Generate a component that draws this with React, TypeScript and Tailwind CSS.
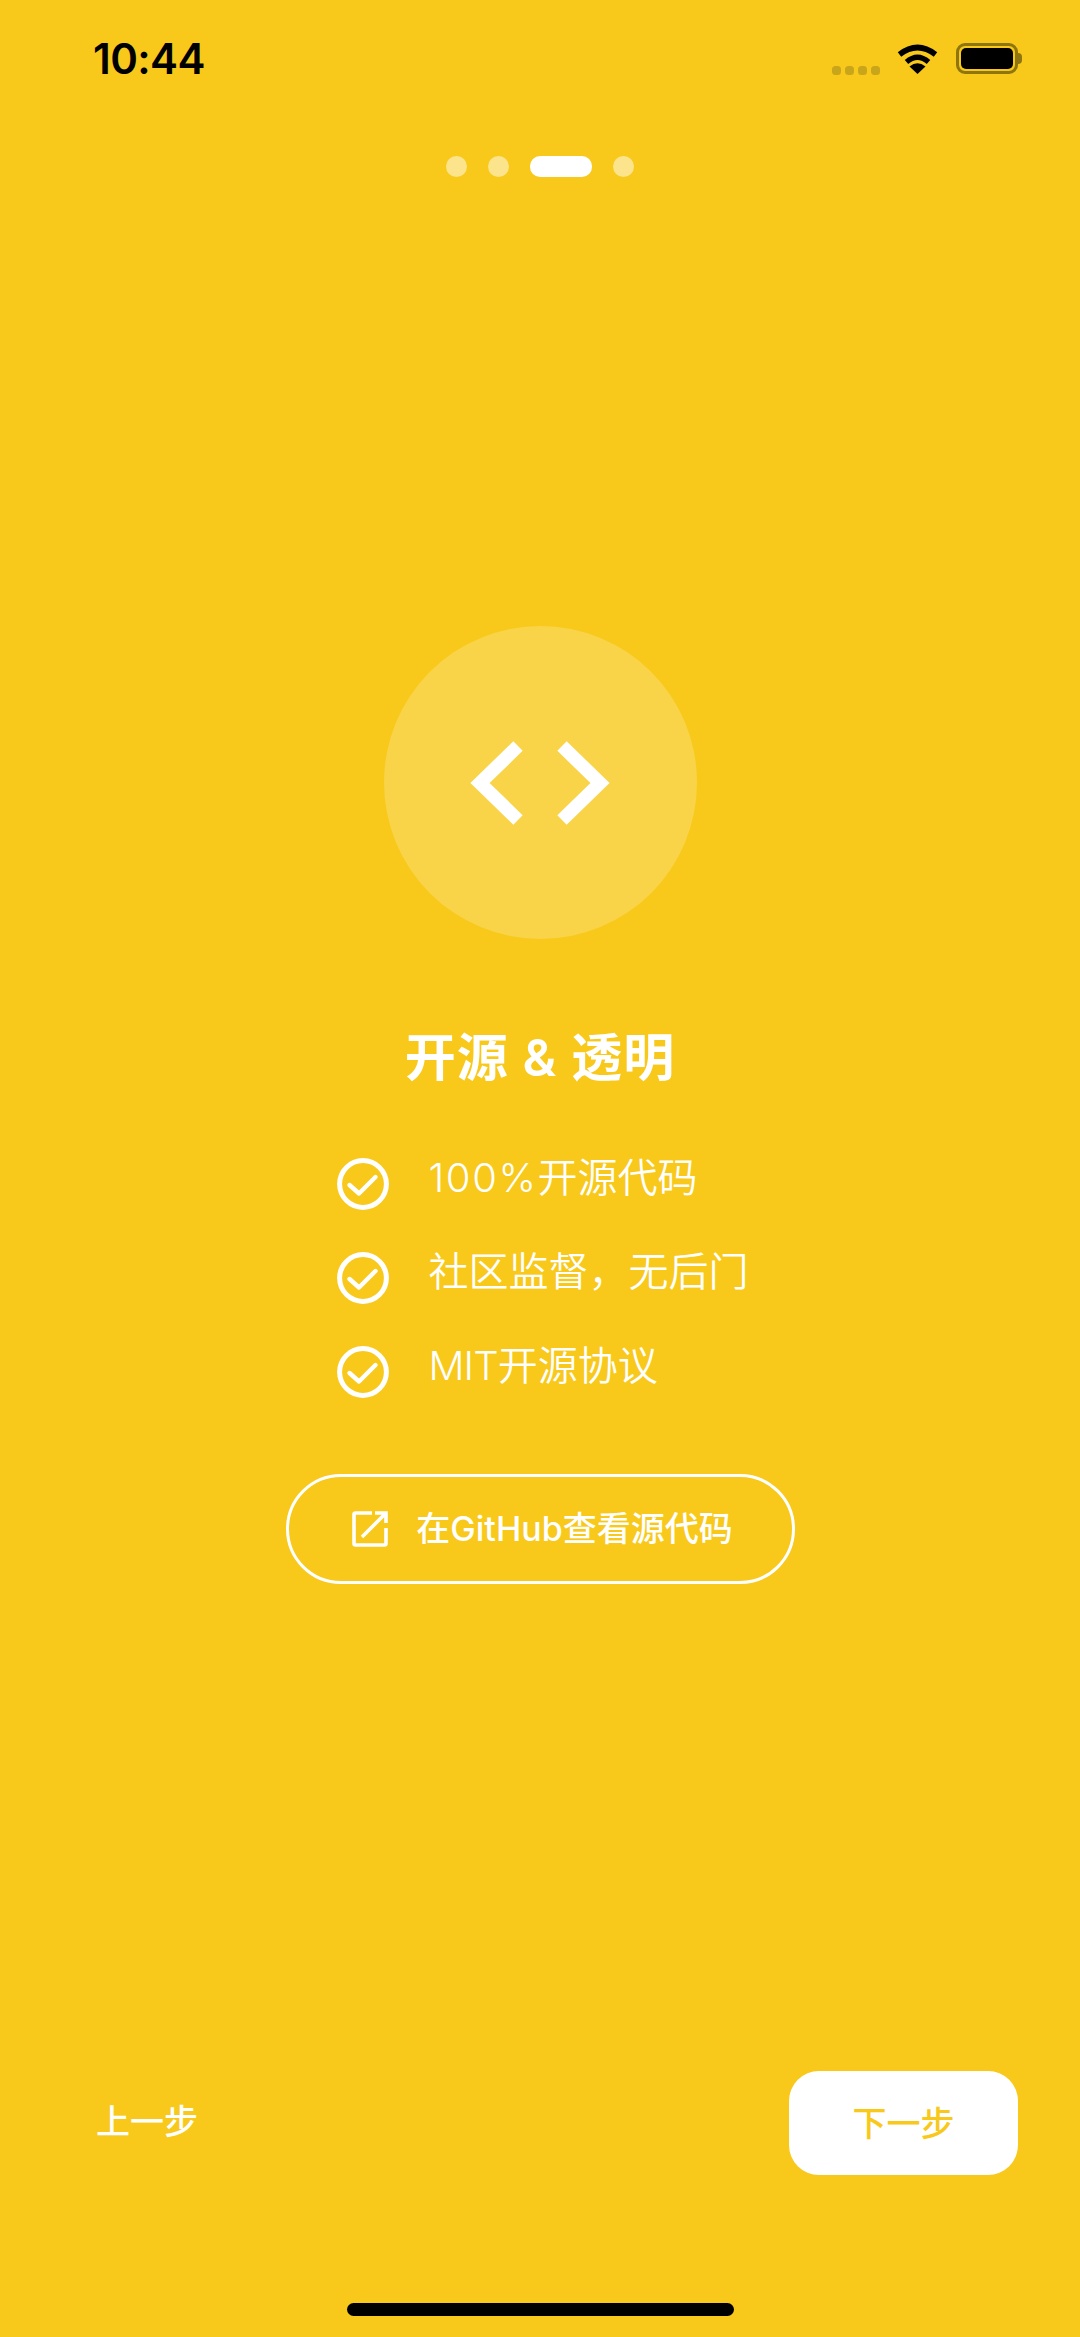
import React from "react";

const cjk = "font-['Inter','Noto_Sans_CJK_SC',sans-serif]";

function CheckIcon() {
  return (
    <svg width="52" height="52" viewBox="0 0 52 52" fill="none" className="shrink-0">
      <circle cx="26" cy="26" r="23.4" stroke="#fff" strokeWidth="5" />
      <path d="M12.5 27 L22 35.5 L38.5 19" stroke="#fff" strokeWidth="4.4" strokeLinecap="round" strokeLinejoin="round" />
    </svg>
  );
}

function Item({ latin, latinClass, text }: { latin?: string; latinClass?: string; text: string }) {
  return (
    <div className="flex items-start gap-[40px] h-[52px]">
      <CheckIcon />
      <span className={`${cjk} text-[40px] leading-[40px] font-[350] text-white whitespace-nowrap`}>
        {latin ? <span className={latinClass}>{latin}</span> : null}
        {text}
      </span>
    </div>
  );
}

export default function App() {
  return (
    <div className={`${cjk} w-[1080px] h-[2337px] bg-[#f8c91b] flex flex-col overflow-hidden`}>
      {/* status bar */}
      <div className="flex items-start justify-between pl-[93px] pr-[62px] pt-[43px] h-[156px]">
        <span className="font-['Inter',sans-serif] text-[42px] leading-[32px] font-semibold text-black tracking-[-0.6px]">10:44</span>
        <div className="flex items-start">
          <div className="flex gap-[4px] mt-[23px]">
            <div className="w-[9px] h-[9px] rounded-[3.5px] bg-[#c9a51b]" />
            <div className="w-[9px] h-[9px] rounded-[3.5px] bg-[#c9a51b]" />
            <div className="w-[9px] h-[9px] rounded-[3.5px] bg-[#c9a51b]" />
            <div className="w-[9px] h-[9px] rounded-[3.5px] bg-[#c9a51b]" />
          </div>
          <svg width="41" height="31" viewBox="0 0 41 31" className="ml-[17px]" fill="none">
            <path d="M2.5 11.5 Q20.5 -2.5 38.5 11.5" stroke="#000" strokeWidth="5.6" />
            <path d="M9.5 19 Q20.5 9.5 31.5 19" stroke="#000" strokeWidth="5.4" />
            <path d="M20.5 31 L12.5 23.5 Q20.5 17 28.5 23.5 Z" fill="#000" />
          </svg>
          <div className="ml-[18px] w-[62px] h-[31px] rounded-[9px] border-[3px] border-[#8f7510] p-[2px] relative">
            <div className="w-full h-full rounded-[5px] bg-black" />
            <div className="absolute left-[59px] top-[7px] w-[4px] h-[11px] rounded-r-[4px] bg-[#8f7510]" />
          </div>
        </div>
      </div>

      {/* page indicator */}
      <div className="flex justify-center gap-[21px]">
        <div className="w-[21px] h-[21px] rounded-full bg-white/50" />
        <div className="w-[21px] h-[21px] rounded-full bg-white/50" />
        <div className="w-[62px] h-[21px] rounded-[10px] bg-white" />
        <div className="w-[21px] h-[21px] rounded-full bg-white/50" />
      </div>

      {/* body */}
      <div className="flex flex-col items-center mt-[449px]">
        <div className="w-[313px] h-[313px] rounded-full bg-white/20 flex items-center justify-center">
          <svg width="140" height="84" viewBox="0 0 140 84" fill="none">
            <path d="M48 5 L10 42 L48 79" stroke="#fff" strokeWidth="13.4" />
            <path d="M92 5 L130 42 L92 79" stroke="#fff" strokeWidth="13.4" />
          </svg>
        </div>

        <h1 className="mt-[89px] h-[60px] text-[51px] leading-[60px] font-semibold text-white whitespace-nowrap tracking-[1px]">开源 &amp; 透明</h1>

        <div className="mt-[70px] ml-[5px] flex flex-col gap-[42px]">
          <Item latin="100%" latinClass="tracking-[1.6px]" text="开源代码" />
          <Item text="社区监督，无后门" />
          <Item latin="MIT" latinClass="tracking-[-0.9px]" text="开源协议" />
        </div>

        <div className="mt-[76px] w-[509px] h-[110px] rounded-full border-[3px] border-white flex items-center justify-center gap-[28px] pl-[5px]">
          <svg width="36" height="36" viewBox="0 0 36 36" fill="none">
            <path d="M20 2 H3.5 a1.5 1.5 0 0 0 -1.5 1.5 V32.5 a1.5 1.5 0 0 0 1.5 1.5 H32.5 a1.5 1.5 0 0 0 1.5 -1.5 V17" stroke="#fff" strokeWidth="3.6" />
            <path d="M10 26 L33 3 M23 2 H34 V12" stroke="#fff" strokeWidth="3.6" />
          </svg>
          <span className="text-[34px] leading-[40px] font-medium text-white whitespace-nowrap">在GitHub查看源代码</span>
        </div>
      </div>

      {/* footer */}
      <div className="mt-auto">
        <div className="flex items-center justify-between pl-[96px] pr-[62px]">
          <span className="text-[34px] leading-[40px] font-medium text-white mt-[-2px]">上一步</span>
          <div className="w-[229px] h-[104px] rounded-[30px] bg-white flex items-center justify-center">
            <span className="text-[34px] leading-[40px] font-medium text-[#f8c91b] mt-[2px]">下一步</span>
          </div>
        </div>
        <div className="flex justify-center mt-[128px] pb-[21px]">
          <div className="w-[387px] h-[13px] rounded-full bg-black" />
        </div>
      </div>
    </div>
  );
}
